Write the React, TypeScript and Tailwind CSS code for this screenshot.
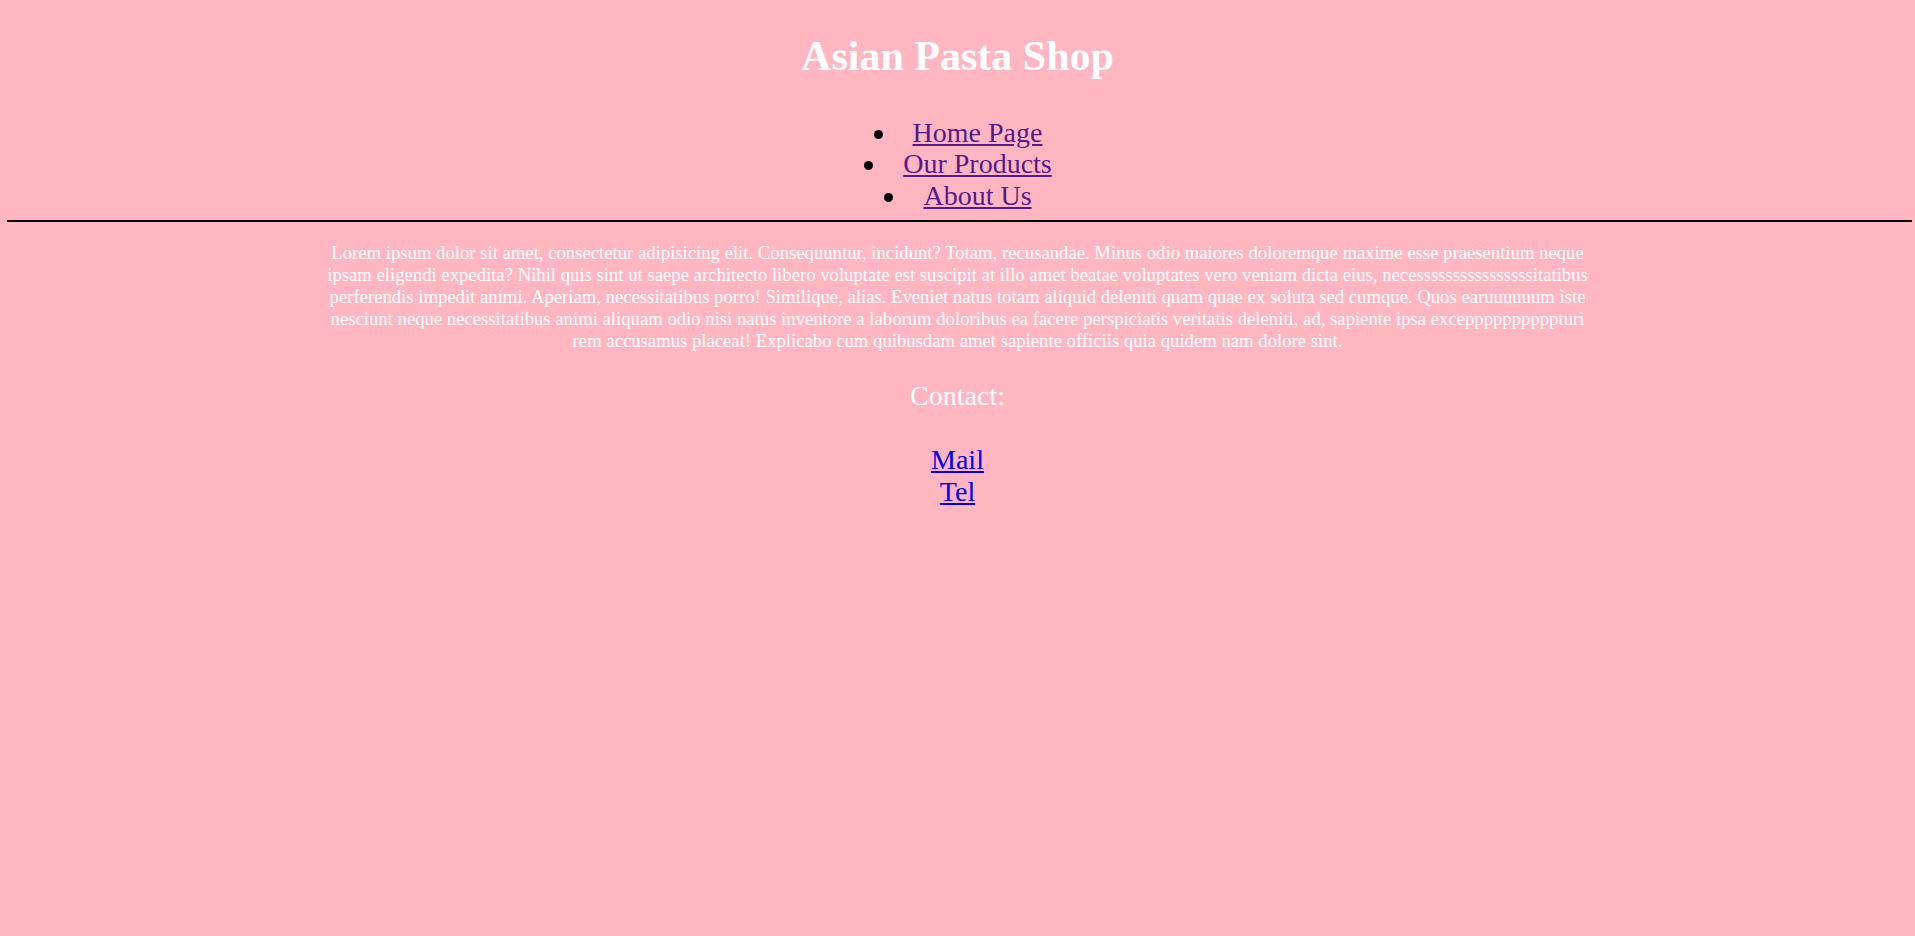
const navLinks = ["Home Page", "Our Products", "About Us"];

const lorem =
  "Lorem ipsum dolor sit amet, consectetur adipisicing elit. Consequuntur, incidunt? Totam, recusandae. Minus odio maiores doloremque maxime esse praesentium neque ipsam eligendi expedita? Nihil quis sint ut saepe architecto libero voluptate est suscipit at illo amet beatae voluptates vero veniam dicta eius, necessssssssssssssssitatibus perferendis impedit animi. Aperiam, necessitatibus porro! Similique, alias. Eveniet natus totam aliquid deleniti quam quae ex soluta sed cumque. Quos earuuuuuum iste nesciunt neque necessitatibus animi aliquam odio nisi natus inventore a laborum doloribus ea facere perspiciatis veritatis deleniti, ad, sapiente ipsa exceppppppppppturi rem accusamus placeat! Explicabo cum quibusdam amet sapiente officiis quia quidem nam dolore sint.";

export default function App() {
  return (
    <div className="min-h-screen bg-[#ffb6c1] pt-[32px] text-center font-['Liberation_Serif','Times_New_Roman',serif] text-white">
      <h1 className="text-[42px] leading-[1.149] font-bold">Asian Pasta Shop</h1>
      <ul className="mt-[36.5px] pl-10 text-[28px] leading-[31.4px]">
        {navLinks.map((link) => (
          <li key={link}>
            <span className="relative">
              <span className="absolute top-[13px] right-full mr-[30px] h-[9px] w-[9px] rounded-full bg-black" />
              <a href="#" className="text-[#551a8b] underline">
                {link}
              </a>
            </span>
          </li>
        ))}
      </ul>
      <hr className="mt-[9.5px] mr-[3px] ml-[7px] border-t-2 border-black" />
      <p className="mx-auto mt-[20px] w-2/3 text-[18.7px] leading-[21.9px]">{lorem}</p>
      <p className="mt-[28px] text-[28px] leading-[1.149]">Contact:</p>
      <div className="mt-[32px] flex flex-col items-center text-[28px] leading-[31.4px]">
        <a href="#" className="text-[#0000ee] underline">
          Mail
        </a>
        <a href="#" className="text-[#0000ee] underline">
          Tel
        </a>
      </div>
    </div>
  );
}
